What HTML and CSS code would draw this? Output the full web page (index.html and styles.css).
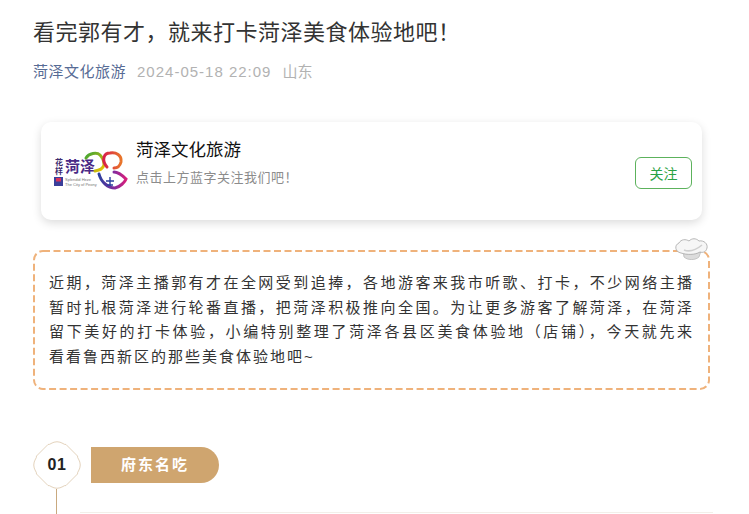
FILE: index.html
```html
<!DOCTYPE html>
<html lang="zh-CN">
<head>
    <meta charset="UTF-8">
    <title>看完郭有才，就来打卡菏泽美食体验地吧！</title>
    <link rel="stylesheet" href="styles.css">
</head>
<body>
    <div class="page">
        <h1 class="title">看完郭有才，就来打卡菏泽美食体验地吧！</h1>
        <div class="meta">
            <a class="author">菏泽文化旅游</a>
            <span class="date">2024-05-18 22:09</span>
            <span>山东</span>
        </div>

        <div class="card">
            <svg class="logo" viewBox="0 0 74 42" width="74" height="42">
                <defs>
                    <linearGradient id="g1" x1="0" y1="0" x2="1" y2="1">
                        <stop offset="0" stop-color="#3fa535"/>
                        <stop offset="1" stop-color="#f2c200"/>
                    </linearGradient>
                    <linearGradient id="g2" x1="0" y1="0" x2="1" y2="0">
                        <stop offset="0" stop-color="#d81e4a"/>
                        <stop offset="1" stop-color="#e8752a"/>
                    </linearGradient>
                    <linearGradient id="g3" x1="0" y1="0" x2="1" y2="0">
                        <stop offset="0" stop-color="#2a3f9e"/>
                        <stop offset="0.6" stop-color="#8a2a9c"/>
                        <stop offset="1" stop-color="#d81e7a"/>
                    </linearGradient>
                </defs>
                <text class="logo-small" x="1" y="15">花</text>
                <text class="logo-small" x="1" y="24">样</text>
                <text class="logo-big" x="11" y="22">菏泽</text>
                <rect x="0" y="27" width="9" height="9" fill="#3a3f9a"/>
                <rect x="2" y="28" width="5" height="3.5" fill="#d8325a"/>
                <text class="logo-tiny" x="11" y="31">Splendid Heze</text>
                <text class="logo-tiny" x="11" y="36">The City of Peony</text>
                <path d="M32 8C35 3 43 2 46 5C49 8 50 12 50 15C49 19 46 20 41 21" fill="none" stroke="url(#g1)" stroke-width="3" stroke-linecap="round"/>
                <path d="M53 17C47 10 50 3 56 3C62 2 68 5 67 12C66 16 63 18 60 18" fill="none" stroke="url(#g2)" stroke-width="3" stroke-linecap="round"/>
                <path d="M45 24C47 32 54 38 61 38C66 37 71 32 72 29C69 26 65 22 60 22" fill="none" stroke="url(#g3)" stroke-width="3" stroke-linecap="round"/>
                <path d="M56 27V36M52 31H60M53 35H59" fill="none" stroke="#2a3f9e" stroke-width="1.4"/>
            </svg>
            <div class="card-info">
                <div class="card-name">菏泽文化旅游</div>
                <div class="card-desc">点击上方蓝字关注我们吧！</div>
            </div>
            <button class="follow">关注</button>
        </div>

        <div class="intro">
            <svg class="intro-border" viewBox="0 0 677 140" width="677" height="140">
                <rect x="1" y="1" width="675" height="138" rx="9" fill="none" stroke="#efb27b" stroke-width="2" stroke-dasharray="7 3.500"/>
            </svg>
            <svg class="hat" viewBox="0 0 34 23" width="34" height="23">
                <path d="M9 14L10 20C14 23.500 21 23.500 25 20L27 14Z" fill="#dcdcdc" stroke="#b4b4b4" stroke-width="0.7"/>
                <path d="M7 16C1 15 0 8 5 6C7 2 12 2 15 4C18 1 22 1 25 4C30 3 34 7 33 11C32 15 29 16 26 15C21 18 13 18 7 16Z" fill="#f6f6f6" stroke="#a6a6a6" stroke-width="0.8"/>
                <path d="M10 13C15 15 22 13 28 8" fill="none" stroke="#cfcfcf" stroke-width="1.600"/>
            </svg>
            <p class="line">近期，菏泽主播郭有才在全网受到追捧，各地游客来我市听歌、打卡，不少网络主播</p>
            <p class="line">暂时扎根菏泽进行轮番直播，把菏泽积极推向全国。为让更多游客了解菏泽，在菏泽</p>
            <p class="line">留下美好的打卡体验，小编特别整理了菏泽各县区美食体验地（店铺），今天就先来</p>
            <p class="line last">看看鲁西新区的那些美食体验地吧~</p>
        </div>

        <div class="section">
            <div class="section-side">
                <div class="badge">
                    <svg class="badge-bg" viewBox="0 0 48 48" width="48" height="48">
                        <path d="M15 3.500Q17 3.500 18 2.500Q24 -1 30 2.500Q31 3.500 33 3.500L44.500 15Q44.500 17 45.500 18Q49 24 45.500 30Q44.500 31 44.500 33L33 44.500Q31 44.500 30 45.500Q24 49 18 45.500Q17 44.500 15 44.500L3.500 33Q3.500 31 2.500 30Q-1 24 2.500 18Q3.500 17 3.500 15Z" fill="#fff" stroke="#e0cdb4" stroke-width="0.900"/>
                    </svg>
                    <span class="badge-num">01</span>
                </div>
                <div class="stem"></div>
            </div>
            <div class="section-main">
                <div class="pill">府东名吃</div>
                <div class="rule"></div>
            </div>
        </div>
    </div>
</body>
</html>
```

FILE: styles.css
```css
*{
    margin: 0;
    padding: 0;
    box-sizing: border-box;
    font-family: "Liberation Sans", "Noto Sans CJK SC", sans-serif;
}
html, body{
    height: 514px;
    overflow: hidden;
    background-color: #fff;
}
.page{
    padding: 18px 39px 0 33px;
}
.title{
    font-size: 22px;
    font-weight: 400;
    line-height: 30px;
    letter-spacing: 0.500px;
    color: #333;
}
.meta{
    display: flex;
    gap: 11px;
    margin-top: 15px;
    font-size: 15px;
    line-height: 17px;
    color: #b2b2b2;
}
.author{
    letter-spacing: 0.500px;
    color: #576b95;
}
.date{
    letter-spacing: 1px;
}
.card{
    display: flex;
    align-items: center;
    height: 98px;
    margin: 42px 8px 0;
    padding: 0 10px 0 13px;
    border-radius: 10px;
    background-color: #fff;
    box-shadow: 0 3px 10px rgba(0, 0, 0, 0.14);
}
.logo{
    flex: none;
}
.logo-small{
    font-size: 8px;
    font-weight: 700;
    fill: #3b2a6e;
}
.logo-big{
    font-size: 15px;
    font-weight: 700;
    fill: #4a2a86;
}
.logo-tiny{
    font-size: 4px;
    fill: #777;
}
.card-info{
    flex: 1;
    margin-left: 8px;
    margin-top: -17px;
}
.card-name{
    font-size: 17.500px;
    line-height: 24px;
    color: #111;
}
.card-desc{
    margin-top: 7px;
    font-size: 13px;
    line-height: 18px;
    letter-spacing: 0.500px;
    color: #8c8c8c;
}
.follow{
    width: 57px;
    height: 32px;
    margin-top: 3px;
    border: 1px solid #5cb25c;
    border-radius: 6px;
    background-color: #fff;
    font-size: 14px;
    color: #2ba245;
}
.intro{
    position: relative;
    width: 677px;
    height: 140px;
    margin-top: 30px;
    padding: 21px 16px 0;
}
.intro-border{
    position: absolute;
    top: 0;
    left: 0;
}
.hat{
    position: absolute;
    top: -13px;
    right: 2px;
}
.line{
    font-size: 15px;
    line-height: 24.500px;
    letter-spacing: 1.900px;
    color: #333;
    text-align: justify;
    text-align-last: justify;
    white-space: nowrap;
}
.line.last{
    text-align-last: left;
    letter-spacing: 2px;
}
.section{
    display: flex;
    gap: 10px;
    margin-top: 51px;
}
.section-side{
    display: flex;
    flex-direction: column;
    align-items: center;
    flex: none;
    width: 48px;
}
.badge{
    position: relative;
    width: 48px;
    height: 48px;
}
.badge-bg{
    display: block;
    overflow: visible;
}
.badge-num{
    position: absolute;
    inset: 0;
    display: flex;
    align-items: center;
    justify-content: center;
    font-size: 16px;
    font-weight: 700;
    letter-spacing: 0.500px;
    color: #222;
}
.stem{
    width: 1px;
    height: 26px;
    margin-right: 1px;
    background-color: #c9a97f;
}
.section-main{
    flex: 1;
    padding-top: 6px;
}
.pill{
    width: 128px;
    height: 36px;
    border-radius: 0 18px 18px 0;
    background-color: #cfa56f;
    font-size: 15px;
    font-weight: 700;
    line-height: 36px;
    letter-spacing: 2px;
    text-align: center;
    color: #fff;
}
.rule{
    height: 1px;
    margin: 29px -3px 0 -11px;
    background-color: #f3efe9;
}
```
